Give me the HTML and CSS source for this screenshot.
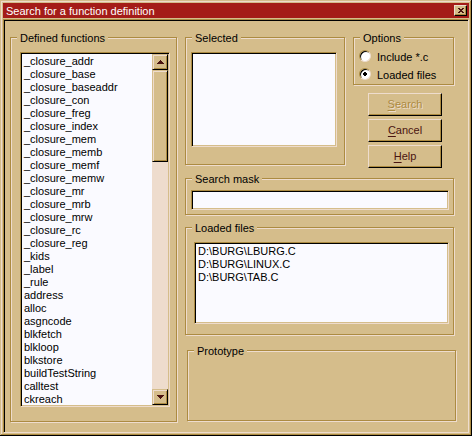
FILE: index.html
```html
<!DOCTYPE html>
<html lang="en">
<head>
<meta charset="utf-8">
<title>Search for a function definition</title>
<link rel="stylesheet" href="styles.css">
</head>
<body>
<main class="window">
  <header class="titlebar">
    <h1 class="title">Search for a function definition</h1>
    <button class="close" type="button" aria-label="Close">
      <svg width="6" height="5" viewBox="0 0 6 5" shape-rendering="crispEdges"><path d="M0 0h2v1h2v-1h2v1h-1v1h-1v1h1v1h1v1h-2v-1h-2v1h-2v-1h1v-1h1v-1h-1v-1h-1z"/></svg>
    </button>
  </header>
  <form class="client">
    <fieldset class="group functions">
      <legend>Defined functions</legend>
      <div class="sunken list-box">
        <ul class="list">
          <li>_closure_addr</li>
          <li>_closure_base</li>
          <li>_closure_baseaddr</li>
          <li>_closure_con</li>
          <li>_closure_freg</li>
          <li>_closure_index</li>
          <li>_closure_mem</li>
          <li>_closure_memb</li>
          <li>_closure_memf</li>
          <li>_closure_memw</li>
          <li>_closure_mr</li>
          <li>_closure_mrb</li>
          <li>_closure_mrw</li>
          <li>_closure_rc</li>
          <li>_closure_reg</li>
          <li>_kids</li>
          <li>_label</li>
          <li>_rule</li>
          <li>address</li>
          <li>alloc</li>
          <li>asgncode</li>
          <li>blkfetch</li>
          <li>blkloop</li>
          <li>blkstore</li>
          <li>buildTestString</li>
          <li>calltest</li>
          <li>ckreach</li>
        </ul>
        <div class="scrollbar">
          <button class="raised arrow" type="button" aria-label="Scroll up"><svg width="7" height="4" viewBox="0 0 7 4" shape-rendering="crispEdges"><path d="M3 0h1v1h1v1h1v1h1v1h-7v-1h1v-1h1v-1h1z"/></svg></button>
          <div class="raised thumb"></div>
          <button class="raised arrow down" type="button" aria-label="Scroll down"><svg width="7" height="4" viewBox="0 0 7 4" shape-rendering="crispEdges"><path d="M0 0h7v1h-1v1h-1v1h-1v1h-1v-1h-1v-1h-1v-1h-1z"/></svg></button>
        </div>
      </div>
    </fieldset>
    <div class="column">
      <div class="top">
        <fieldset class="group selected">
          <legend>Selected</legend>
          <ul class="sunken list"></ul>
        </fieldset>
        <div class="side">
          <fieldset class="group options">
            <legend>Options</legend>
            <label class="option"><input type="radio" name="scope"><span>Include *.c</span></label>
            <label class="option"><input type="radio" name="scope" checked><span>Loaded files</span></label>
          </fieldset>
          <div class="buttons">
            <button class="push" type="button" disabled><u>S</u>earch</button>
            <button class="push" type="button"><u>C</u>ancel</button>
            <button class="push" type="button"><u>H</u>elp</button>
          </div>
        </div>
      </div>
      <fieldset class="group mask">
        <legend><label for="mask">Search mask</label></legend>
        <input class="sunken field" id="mask" type="text">
      </fieldset>
      <fieldset class="group files">
        <legend>Loaded files</legend>
        <ul class="sunken list">
          <li>D:\BURG\LBURG.C</li>
          <li>D:\BURG\LINUX.C</li>
          <li>D:\BURG\TAB.C</li>
        </ul>
      </fieldset>
      <fieldset class="group prototype">
        <legend>Prototype</legend>
      </fieldset>
    </div>
  </form>
</main>
</body>
</html>
```
FILE: styles.css
```css
:root {
  --face: #d5bd8b;
  --light: #eedccd;
  --shadow: #ac8b41;
  --ink: #000;
  --maroon: #4a1410;
  --paper: #fafaff;
}

* {
  box-sizing: border-box;
}

body {
  margin: 0;
  font: 11px/13px "Liberation Sans", sans-serif;
  color: var(--ink);
}

.window {
  display: flex;
  flex-direction: column;
  min-height: 100vh;
  padding: 3px;
  background: var(--face);
  box-shadow:
    inset -1px -1px var(--ink),
    inset 1px 1px var(--face),
    inset -2px -2px var(--shadow),
    inset 2px 2px var(--light);
}

.titlebar {
  display: flex;
  align-items: center;
  justify-content: space-between;
  height: 15px;
  padding: 0 2px 0 3px;
  background: #a41c18;
}

.title {
  margin: 0;
  padding-top: 2px;
  font-size: 11px;
  font-weight: 400;
  color: #fff;
}

.close {
  display: flex;
  align-items: center;
  justify-content: center;
  width: 13px;
  height: 11px;
  padding: 0;
  border: 1px solid;
  border-color: var(--light) var(--ink) var(--ink) var(--light);
  background: var(--face);
  box-shadow: inset -1px -1px var(--shadow);
}

svg {
  fill: var(--maroon);
}

.client {
  flex: 1;
  display: flex;
  gap: 8px;
  margin-top: 1px;
  padding: 11px 14px 10px 6px;
  border: 1px solid;
  border-color: var(--shadow) var(--light) var(--light) var(--shadow);
  box-shadow: inset 1px 1px var(--ink);
}

/* Etched frame: a dark line with a light line to its lower right */
.group {
  min-width: 0;
  margin: 0;
  padding: 8px 5px;
  border: 1px solid var(--shadow);
  box-shadow: 1px 1px var(--light), inset 1px 1px var(--light);
}

.group legend {
  margin-left: 1px;
  padding: 2px 3px 0;
  background: var(--face);
  line-height: 11px;
}

.sunken {
  padding: 1px;
  border: 1px solid;
  border-color: var(--shadow) var(--light) var(--light) var(--shadow);
  background: var(--paper);
  box-shadow: inset 1px 1px var(--ink), inset -1px -1px var(--face);
}

.list {
  margin: 0;
  padding: 2px 3px;
  list-style: none;
}

.functions {
  width: 167px;
  padding-bottom: 14px;
}

.list-box {
  display: flex;
  height: 355px;
  margin: 0 1px 0 4px;
}

.list-box .list {
  flex: 1;
  padding: 1px 2px 0;
  overflow: hidden;
}

.scrollbar {
  display: flex;
  flex-direction: column;
  width: 16px;
  background: var(--light);
}

.raised {
  padding: 0;
  border: 1px solid;
  border-color: var(--face) var(--ink) var(--ink) var(--face);
  background: var(--face);
  box-shadow: inset 1px 1px var(--light), inset -1px -1px var(--shadow);
}

.arrow {
  display: flex;
  align-items: center;
  justify-content: center;
  height: 16px;
}

.thumb {
  height: 92px;
}

.down {
  margin-top: auto;
}

.column {
  flex: 1;
  display: flex;
  flex-direction: column;
}

.top {
  display: flex;
  align-items: flex-start;
  gap: 8px;
}

.selected {
  flex: 1;
  padding: 8px 7px 17px 5px;
}

.selected .list {
  height: 95px;
}

.side {
  width: 101px;
}

.options {
  padding: 3px 5px 1px;
}

.option {
  display: flex;
  align-items: center;
  gap: 6px;
  height: 18px;
}

.option span {
  padding-top: 2px;
}

.option input {
  appearance: none;
  width: 12px;
  height: 12px;
  margin: 0;
  border: 1px solid;
  border-color: var(--shadow) var(--light) var(--light) var(--shadow);
  border-radius: 50%;
  background: #fff;
  box-shadow: inset 1px 1px var(--ink);
}

.option input:checked {
  background: radial-gradient(circle, var(--ink) 2px, #fff 2px);
}

.buttons {
  display: grid;
  gap: 3px;
  padding: 8px 12px 0 15px;
}

.push {
  height: 23px;
  padding: 0;
  border: 1px solid;
  border-color: var(--light) var(--ink) var(--ink) var(--light);
  background: var(--face);
  box-shadow: inset -1px -1px var(--shadow);
  font: inherit;
  color: var(--maroon);
}

.push u {
  text-underline-offset: 2px;
}

.push:disabled {
  color: var(--shadow);
  text-shadow: 1px 1px var(--light);
}

.mask {
  margin-top: 4px;
  padding: 5px 4px 4px 5px;
}

.field {
  display: block;
  width: 100%;
  height: 20px;
  font: inherit;
}

.files {
  margin-top: 6px;
  padding: 8px 4px 10px 5px;
}

.files .list {
  height: 82px;
  margin-left: 3px;
}

.prototype {
  flex: 1;
  margin: 9px -2px 1px 2px;
}
```
